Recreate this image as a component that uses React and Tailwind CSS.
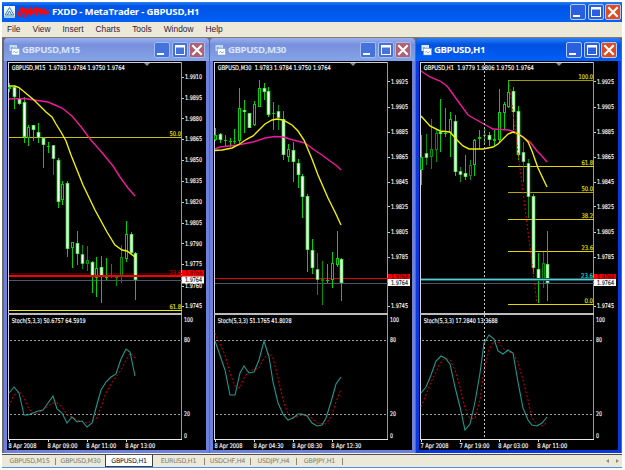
import clsx from 'clsx';

const menus = ['File', 'View', 'Insert', 'Charts', 'Tools', 'Window', 'Help'];

const tabs = [
  { label: 'GBPUSD,M15', width: 'w-[52px]' },
  { label: 'GBPUSD,M30', width: 'w-[49px]' },
  { label: 'GBPUSD,H1', width: 'w-[48px]', active: true },
  { label: 'EURUSD,H1', width: 'w-[52px]' },
  { label: 'USDCHF,H4', width: 'w-[46px]' },
  { label: 'USDJPY,H4', width: 'w-[46px]' },
  { label: 'GBPJPY,H1', width: 'w-[46px]' },
];

// candle: [high, low, bodyTop, bodyBottom, kind]
// kind: w = filled, h = hollow
const charts = [
  {
    title: 'GBPUSD,M15',
    header: 'GBPUSD,M15  1.9783 1.9784 1.9750 1.9764',
    headerWidth: 113,
    x: 7,
    prices: [
      ['1.9910', 77], ['1.9895', 98], ['1.9880', 118.5], ['1.9865', 139], ['1.9850', 160], ['1.9835', 181],
      ['1.9820', 202], ['1.9805', 223], ['1.9790', 243.5], ['1.9775', 264], ['1.9760', 286], ['1.9745', 306],
    ],
    candles: [
      [83, 92, 87, 89, 'h'], [86, 109, 87, 97, 'w'], [88, 105, 98, 104, 'w'], [97, 143, 102, 137, 'w'],
      [125, 146, 127, 138, 'h'], [125, 141, 125, 130, 'w'], [123, 143, 132, 138, 'w'], [137, 168, 138, 145, 'w'],
      [142, 153, 146, 147, 'h'], [145, 175, 145, 159, 'w'], [158, 208, 160, 202, 'w'], [181, 205, 184, 200, 'h'],
      [181, 257, 183, 249, 'w'], [242, 268, 242, 248, 'h'], [231, 265, 243, 254, 'w'], [245, 269, 254, 264, 'w'],
      [246, 271, 260, 264, 'h'], [261, 293, 262, 277, 'w'], [257, 297, 268, 278, 'h'], [256, 303, 267, 276, 'w'],
      [258, 280, 277, 278, 'h'], [264, 278, 276, 277, 'h'], [275, 286, 276, 278, 'h'], [245, 283, 257, 276, 'h'],
      [221, 262, 234, 259, 'h'], [232, 254, 234, 253, 'w'], [252, 300, 253, 280, 'w'],
    ],
    dim: [9, 15, 16, 21, 22, 23],
    slow: '9,99 25,98.5 34,100 48,102 55,105 62,108 72,116 82,128 90,139 98,148 104,155 113,166 120,177 128,188 135,196',
    fast: '9,86 15,86 19,87.5 28,95 34,100 40,106 46,112 52,117 56,124 61,132 66,141 71,155 83,185 95,210 107,232 115,245 122,250 127,251 135,257',
    stoch: 'Stoch(5,3,3) 50.6757 64.5919',
    k: '9,393 14,387 19,393 24,415 28,415 33,413 38,411 43,410 48,403 53,396 57,409 62,413 67,423 72,417 77,422 82,421 87,427 92,423 96,408 101,390 106,382 111,377 116,374 121,359 126,349 130,352 135,376',
    d: '9,406 14,395 19,391 24,398 28,407 33,414 38,413 43,410 48,406 53,403 57,403 62,407 67,415 72,417 77,420 87,423 96,419 101,407 106,393 111,384 116,377 121,370 126,360 130,353 135,358',
    levels: [
      { y: 137, label: '50.0', color: '#c8c000' },
      { y: 310, label: '61.8', color: '#e8e800' },
      { y: 272.5, label: '23.6', color: '#f00000', hidden: true },
    ],
    ask: { y: 275.5, h: 2.2, tag: 270, price: '1.9766' },
    bid: 280,
    bidTag: 276.5,
    times: ['8 Apr 2008', '8 Apr 09:00', '8 Apr 11:00', '8 Apr 13:00'],
  },
  {
    title: 'GBPUSD,M30',
    header: 'GBPUSD,M30  1.9783 1.9784 1.9750 1.9764',
    headerWidth: 113,
    x: 213,
    prices: [
      ['1.9925', 81.5], ['1.9905', 107], ['1.9885', 132], ['1.9865', 157], ['1.9845', 182],
      ['1.9825', 206.5], ['1.9805', 232], ['1.9785', 257], ['1.9745', 306],
    ],
    candles: [
      [128, 141, 135, 140, 'h'], [133, 143, 134, 140, 'w'], [135, 146, 140, 141, 'h'], [138, 147, 141, 142, 'h'],
      [129, 144, 141, 142, 'h'], [88, 143, 108, 141, 'h'], [100, 133, 110, 112, 'w'], [113, 128, 113, 128, 'w'],
      [101, 126, 104, 125, 'h'], [80, 107, 88, 107, 'h'], [83, 100, 88, 92, 'w'], [87, 117, 91, 115, 'w'],
      [102, 130, 113, 114, 'h'], [105, 130, 111, 118, 'w'], [111, 160, 119, 155, 'w'], [144, 162, 149, 157, 'h'],
      [142, 182, 150, 162, 'w'], [159, 188, 163, 175, 'w'], [174, 218, 176, 197, 'w'], [194, 272, 196, 250, 'w'],
      [239, 274, 250, 268, 'w'], [253, 295, 269, 280, 'w'], [261, 305, 279, 281, 'h'], [264, 283, 280, 281, 'h'],
      [252, 288, 263, 280, 'h'], [231, 267, 258, 265, 'h'], [258, 301, 259, 283, 'w'],
    ],
    dim: [13, 21, 22],
    slow: '215,149 220,147 238,145 253,142 265,138 275,136.5 283,137 293,140 305,143 313,149 322,155 330,161 337,166 341,170',
    fast: '215,150.5 222,150 232,148 238,145 247,139 253,136 258,131 265,124 272,120 277,119 283,120 292,125 298,131 304,140 312,159 318,175 328,198 335,212 341,225',
    stoch: 'Stoch(5,3,3) 51.1765 41.8028',
    k: '215,341 225,370 230,395 235,395 240,373 244,366 249,373 254,372 259,360 264,341 269,357 273,382 278,403 283,414 288,420 293,418 298,414 302,414 307,416 312,423 317,426 322,425 326,418 331,402 336,384 341,377',
    d: '215,333 225,355 230,373 235,386 240,388 244,378 249,371 259,368 264,358 269,353 273,358 278,378 283,400 288,414 293,418 302,415 307,415 312,418 317,423 326,424 331,417 336,402 341,389',
    levels: [],
    ask: { y: 278, h: 1, tag: 274, price: '1.9768' },
    bid: 283,
    bidTag: 279,
    times: ['8 Apr 2008', '8 Apr 04:30', '8 Apr 08:30', '8 Apr 12:30'],
  },
  {
    title: 'GBPUSD,H1',
    header: 'GBPUSD,H1  1.9779 1.9806 1.9750 1.9764',
    headerWidth: 110,
    active: true,
    x: 419,
    prices: [
      ['1.9925', 81.5], ['1.9905', 107], ['1.9885', 132], ['1.9865', 157], ['1.9845', 182],
      ['1.9825', 206.5], ['1.9805', 232], ['1.9785', 257], ['1.9745', 306],
    ],
    candles: [
      [135, 185, 157, 170, 'h'], [134, 165, 153, 158, 'w'], [119, 169, 149, 157, 'h'], [129, 162, 133, 150, 'h'],
      [99, 152, 132, 134, 'w'], [108, 137, 133, 134, 'h'], [112, 157, 119, 133, 'h'], [115, 176, 121, 172, 'w'],
      [167, 182, 171, 175, 'w'], [155, 180, 173, 177, 'w'], [160, 180, 165, 176, 'h'], [139, 176, 140, 165, 'h'],
      [130, 149, 137, 139, 'h'], [128, 145, 135, 136, 'h'], [132, 146, 135, 140, 'w'], [130, 146, 139, 141, 'h'],
      [89, 143, 112, 140, 'h'], [102, 129, 104, 113, 'h'], [80, 108, 92, 107, 'h'], [87, 130, 91, 112, 'w'],
      [106, 160, 111, 155, 'w'], [142, 182, 152, 162, 'w'], [159, 218, 163, 197, 'w'], [194, 274, 196, 268, 'w'],
      [253, 303, 269, 280, 'w'], [252, 288, 263, 281, 'h'], [231, 301, 264, 283, 'w'],
    ],
    dim: [1, 2, 3, 8, 10, 13, 21, 22, 25],
    slow: '421,71 430,77 440,81 447,86 455,97 468,115 482,123 493,129 508,130 515,132 523,137 530,142 537,151 541,155 547,162',
    fast: '421,116 430,126 440,131 450,132 457,140 463,146 469,149 483,149 493,147 498,144 508,134 513,132 518,134 523,137 528,142 532,151 538,168 547,187',
    stoch: 'Stoch(5,3,3) 17.2840 13.3688',
    k: '421,393 426,387 431,375 436,361 441,356 445,358 450,364 455,387 460,407 465,430 470,424 475,402 480,373 484,343 489,335 494,339 498,351 503,354 508,350 513,353 518,382 523,408 528,420 532,425 537,426 542,423 547,417',
    d: '421,407 431,382 436,372 440,363 445,358 450,360 455,370 460,387 465,408 470,419 475,418 480,400 484,370 489,350 494,341 498,342 503,348 508,352 513,353 518,362 523,380 528,400 532,418 537,425 542,426 547,422',
    levels: [
      { y: 80, label: '100.0', color: '#a09800', from: 508 },
      { y: 166, label: '61.8', color: '#e0d800', from: 508 },
      { y: 192, label: '50.0', color: '#b0a800', from: 508 },
      { y: 219, label: '38.2', color: '#d8d000', from: 508 },
      { y: 251, label: '23.6', color: '#e0d800', from: 508 },
      { y: 304, label: '0.0', color: '#e0d800', from: 508 },
    ],
    fib: true,
    ask: { y: 278, h: 1, tag: 274, price: '1.9768' },
    bid: 283,
    bidTag: 279,
    times: ['7 Apr 2008', '7 Apr 19:00', '8 Apr 03:00', '8 Apr 11:00'],
  },
];

const Label = ({ x, y, w, fill = '#ffffff', anchor = 'start', children }) => (
  <text
    x={x}
    y={y + 2.4}
    fill={fill}
    stroke={fill}
    strokeWidth="0.15"
    textAnchor={anchor}
    textLength={w}
    lengthAdjust="spacingAndGlyphs"
    className="text-[6.4px] whitespace-pre [font-family:'DejaVu_Sans',sans-serif]"
  >
    {children}
  </text>
);

const Candle = ({ x, data, dim }) => {
  const [high, low, top, bottom, kind] = data;
  const green = dim ? '#009000' : '#00d400';
  const h = Math.max(bottom - top, 1);
  if (kind === 'w') {
    return (
      <g>
        <rect x={x} y={high} width="1" height={low - high} fill={green} />
        <rect x={x - 1.4} y={top} width="3.8" height={h} fill={green} />
        <rect x={x - 0.6} y={top + 0.5} width="2.2" height={Math.max(h - 1, 1)} fill="#ffffff" />
      </g>
    );
  }
  return (
    <g shapeRendering="crispEdges">
      <rect x={x} y={high} width="1" height={low - high} fill={green} />
      <rect x={x - 1} y={top} width="3" height={h} fill={green} />
      {h > 2 && <rect x={x} y={top + 1} width="1" height={h - 2} fill="#000000" />}
    </g>
  );
};

const Chart = ({ chart }) => {
  const left = chart.x + 1;
  const right = chart.x + 175;
  return (
    <svg viewBox={`${chart.x} 61 199 389`} className="block h-[389px] w-[199px] bg-black">
      <g shapeRendering="crispEdges">
        <rect x={left} y="62" width="174" height="1" fill="#d0d0d0" />
        <rect x={left} y="62" width="1" height="378" fill="#d8d8d8" />
        <rect x={right - 1} y="62" width="1" height="378" fill="#989898" />
        <rect x={left} y="313" width="174" height="2" fill="#bcbcbc" />
        <rect x={left} y="439" width="174" height="1" fill="#e8e8e8" />
        {chart.prices.map(([price, y]) => (
          <rect key={price} x={right} y={Math.floor(y)} width="2" height="1" fill="#d0d0d0" />
        ))}
        {chart.times.map((time, i) => (
          <rect key={time} x={left + 1 + Math.round(i * 38.9)} y="440" width="1" height="2" fill="#e0e0e0" />
        ))}
        {[340, 414].map((y) => (
          <line key={y} x1={left + 2} x2={right - 1} y1={y + 0.5} y2={y + 0.5} stroke="#a0a0a0" strokeDasharray="2 2" />
        ))}
      </g>

      <path d={`M${chart.x + 137} 63h6l-3 3z`} fill="#8090a0" />

      <rect x={left + 1} y={chart.bid} width="173" height="1" fill="#4c5868" />
      {chart.levels.filter((l) => !l.hidden).map((l) => (
        <rect key={l.y} x={l.from || left + 1} y={l.y} width={right - (l.from || left + 1)} height="1" fill={l.color} />
      ))}
      {chart.ask.h > 1 && <rect x={left + 1} y="273" width="173" height="1" fill="#480000" />}
      {!chart.fib && chart.ask.h === 1 && <rect x={left + 1} y={chart.ask.y} width="173" height="1" fill="#e00000" />}

      {chart.candles.map((c, i) => (
        <Candle key={i} x={Math.round(chart.x + 2 + i * 4.86)} data={c} dim={chart.dim.includes(i)} />
      ))}
      {chart.ask.h > 1 && <rect x={left + 1} y="275" width="173" height="2" fill="#f80000" />}

      <polyline points={chart.slow} fill="none" stroke="#f0189c" strokeWidth="1.4" />
      <polyline points={chart.fast} fill="none" stroke="#f0f000" strokeWidth="1.4" />

      {chart.fib && (
        <g>
          <line x1="509" y1="81" x2="537" y2="303" stroke="#d80000" strokeDasharray="2 2" />
          <line x1="484.5" y1="63" x2="484.5" y2="439" stroke="#c8c8c8" strokeDasharray="2 2" />
          <rect x={left + 1} y="278" width="173" height="1" fill="#803030" />
          <rect x={left + 1} y="279" width="173" height="1" fill="#00f0f8" />
          <rect x={left + 1} y="280" width="173" height="1" fill="#00646c" />
          <Label x={right - 1} y={275.8} w={12} anchor="end" fill="#00e0e8">23.6</Label>
        </g>
      )}
      {chart.levels.map((l) => (
        <Label
          key={l.label + l.y}
          x={right - 1}
          y={l.hidden ? l.y : l.y - 3.3}
          w={l.label.length === 3 ? 8.5 : l.label.length * 2.9}
          anchor="end"
          fill={l.hidden ? '#c80000' : '#e0e000'}
        >
          {l.label}
        </Label>
      ))}

      <Label x={chart.x + 4.7} y={67.5} w={chart.headerWidth}>{chart.header}</Label>
      <Label x={chart.x + 4.7} y={320.5} w={74}>{chart.stoch}</Label>

      {chart.prices.map(([price, y]) => (
        <Label key={price} x={right + 3} y={y} w={17}>{price}</Label>
      ))}
      <rect x={right} y={chart.ask.tag} width="22" height="7" fill="#f80000" />
      <Label x={right + 3} y={chart.ask.tag + 3} w={17} fill="#600000">{chart.ask.price}</Label>
      <rect x={right} y={chart.bidTag} width="22" height="7" fill="#ffffff" />
      <Label x={right + 3} y={chart.bidTag + 3.5} w={17} fill="#202020">1.9764</Label>

      <polyline points={chart.d} fill="none" stroke="#d80000" strokeDasharray="2 2" />
      <polyline points={chart.k} fill="none" stroke="#20988e" strokeWidth="1.1" />

      <Label x={right + 2} y={319.3} w={9}>100</Label>
      <Label x={right + 2} y={340} w={6}>80</Label>
      <Label x={right + 2} y={414} w={6}>20</Label>
      <Label x={right + 2} y={435.5} w={3}>0</Label>

      {chart.times.map((time, i) => (
        <Label key={time} x={left + 0.5 + i * 38.9} y={445.2} w={i === 0 ? 28 : 30}>{time}</Label>
      ))}
    </svg>
  );
};

const WindowButtons = ({ inactive }) => {
  const base = clsx(
    'block size-4 rounded-[2px] border',
    inactive ? 'border-[#a4bcf4]' : 'border-[#b4c8f4]'
  );
  const blue = inactive ? 'bg-[#4672dc]' : 'bg-[#2a60e0]';
  const red = inactive ? 'bg-[#b06070]' : 'bg-[#e04c20]';
  return (
    <div className="flex gap-[1.5px]">
      <span className={clsx(base, blue)}>
        <svg viewBox="0 0 14 14" className="size-full">
          <rect x="2" y="10" width="7" height="2" fill="#fff" />
        </svg>
      </span>
      <span className={clsx(base, blue)}>
        <svg viewBox="0 0 14 14" className="size-full">
          <path d="M2 2h10v10H2zM3 4.5h8V11H3z" fill="#fff" fillRule="evenodd" />
        </svg>
      </span>
      <span className={clsx(base, red)}>
        <svg viewBox="0 0 14 14" className="size-full">
          <path d="M2.3 2.3l9.4 9.4M11.7 2.3l-9.4 9.4" stroke="#fff" strokeWidth="2.2" />
        </svg>
      </span>
    </div>
  );
};

const ChartWindow = ({ chart }) => (
  <div
    className={clsx(
      'flex h-[415px] w-[205px] flex-col rounded-t-[4px] px-[3px] pb-[3px]',
      chart.active ? 'bg-[#0838e0]' : 'bg-[#6c80dc]'
    )}
  >
    <div
      className={clsx(
        '-mx-[3px] flex h-[23px] shrink-0 items-center rounded-t-[4px] pt-px pr-[4px] pl-[5px]',
        chart.active
          ? 'bg-linear-to-b from-[#2c80f8] via-[#0050e0] via-30% to-[#0060f8]'
          : 'bg-linear-to-b from-[#98b0f0] via-[#7890dc] via-30% to-[#84a4e8]'
      )}
    >
      <svg viewBox="0 0 11 12" className="h-3 w-[11px]">
        <rect x="0.5" y="1" width="7.5" height="6" fill={chart.active ? '#e0ecfc' : '#c4dcf4'} />
        <path d="M1.5 4l1.5-1 1.5 1.5 2-1.5" fill="none" stroke="#68a0d0" strokeWidth=".8" />
        <rect x="2.5" y="4.5" width="8" height="6.5" fill="#fff" stroke="#68a0d0" strokeWidth=".6" />
        <path d="M4 8.5l1.5-1 1.5 1.5 2-1.5" fill="none" stroke="#68a0d0" strokeWidth=".8" />
      </svg>
      <span
        className={clsx(
          "ml-[2px] flex-1 text-[9.6px] leading-none font-bold tracking-[-0.4px] [font-family:'Open_Sans','Noto_Sans',sans-serif]",
          chart.active ? 'text-white' : 'text-[#d8e4fa]'
        )}
      >
        {chart.title}
      </span>
      <WindowButtons inactive={!chart.active} />
    </div>
    <Chart chart={chart} />
  </div>
);

const TitleBar = () => (
  <div className="flex h-5 shrink-0 items-center bg-linear-to-b from-[#2880f0] via-[#0054e4] via-20% to-[#0060f4] pr-px pl-[2px]">
    <svg viewBox="0 0 11 12" className="h-3 w-[11px]">
      <rect width="11" height="12" fill="#f0f8fc" />
      <path d="M1 9L5.5 1.5 10 9zM3.3 9l2.2-4 2.2 4" fill="none" stroke="#2078b0" strokeWidth=".9" />
      <path d="M0 11h11" stroke="#50a0c8" strokeWidth="1" />
    </svg>
    <svg viewBox="0 0 35 14" className="h-[14px] w-[35px]">
      <path
        d="M3 10l2-5 2-2 1 3-3 5 5-7 2 1-2 7 4-7 2-2 0 7 3-6 2-1 0 7 3-6 2 0 0 5 3-5 1 5 4-2-5 0-7-1-6 2-6-1"
        fill="none"
        stroke="#f80808"
        strokeWidth="2"
        strokeLinejoin="round"
        strokeLinecap="round"
      />
    </svg>
    <span className="ml-[2px] flex-1 text-[9.6px] leading-none font-bold tracking-[-0.2px] whitespace-nowrap text-white [font-family:'Open_Sans','Noto_Sans',sans-serif]">
      FXDD - MetaTrader - GBPUSD,H1
    </span>
    <WindowButtons />
  </div>
);

const MenuBar = () => (
  <div className="flex h-[15px] shrink-0 items-center gap-[12px] bg-[#ece9d8] pl-[5px] text-[8.4px] leading-none text-[#301838] [font-family:'Liberation_Sans',Arial,sans-serif]">
    {menus.map((menu) => (
      <span key={menu}>{menu}</span>
    ))}
  </div>
);

const TabBar = () => (
  <div className="flex h-[13px] shrink-0 items-stretch border-t border-[#505048] bg-[#ece9d8] pl-[2px] text-[6.4px] leading-none text-[#807c6c] [font-family:'DejaVu_Sans',sans-serif]">
    {tabs.map((tab, i) => (
      <div key={tab.label} className={clsx('flex shrink-0 items-center', tab.width)}>
        <span
          className={clsx(
            'flex flex-1 items-center justify-center tracking-[-0.25px] whitespace-nowrap',
            tab.active ? 'h-full border-x border-b border-[#404040] bg-white pt-px text-[#101010]' : 'h-[7px]',
            !tab.active && i !== 1 && 'border-r border-[#8c8878]'
          )}
        >
          {tab.label}
        </span>
      </div>
    ))}
    <div className="ml-auto flex items-center gap-[7px] pr-[3px]">
      <svg viewBox="0 0 3 4" className="h-1 w-[3px]"><path d="M3 0v4L0 2z" fill="#8c8c84" /></svg>
      <svg viewBox="0 0 3 4" className="h-1 w-[3px]"><path d="M0 0v4l3-2z" fill="#8c8c84" /></svg>
    </div>
  </div>
);

const App = () => (
  <div className="h-[470px] w-[625px] overflow-hidden bg-white pt-[2px] pl-[2px]">
    <div className="flex h-[466px] w-[620px] flex-col border-b border-[#5090e0] bg-[#ece9d8]">
      <TitleBar />
      <MenuBar />
      <div className="flex h-[416px] shrink-0 gap-px border-t border-[#807c70] bg-[#6c6a64] pl-[2px]">
        {charts.map((chart) => (
          <ChartWindow key={chart.title} chart={chart} />
        ))}
      </div>
      <div className="h-px shrink-0 bg-[#f4f2e8]" />
      <TabBar />
    </div>
  </div>
);

export default App;
